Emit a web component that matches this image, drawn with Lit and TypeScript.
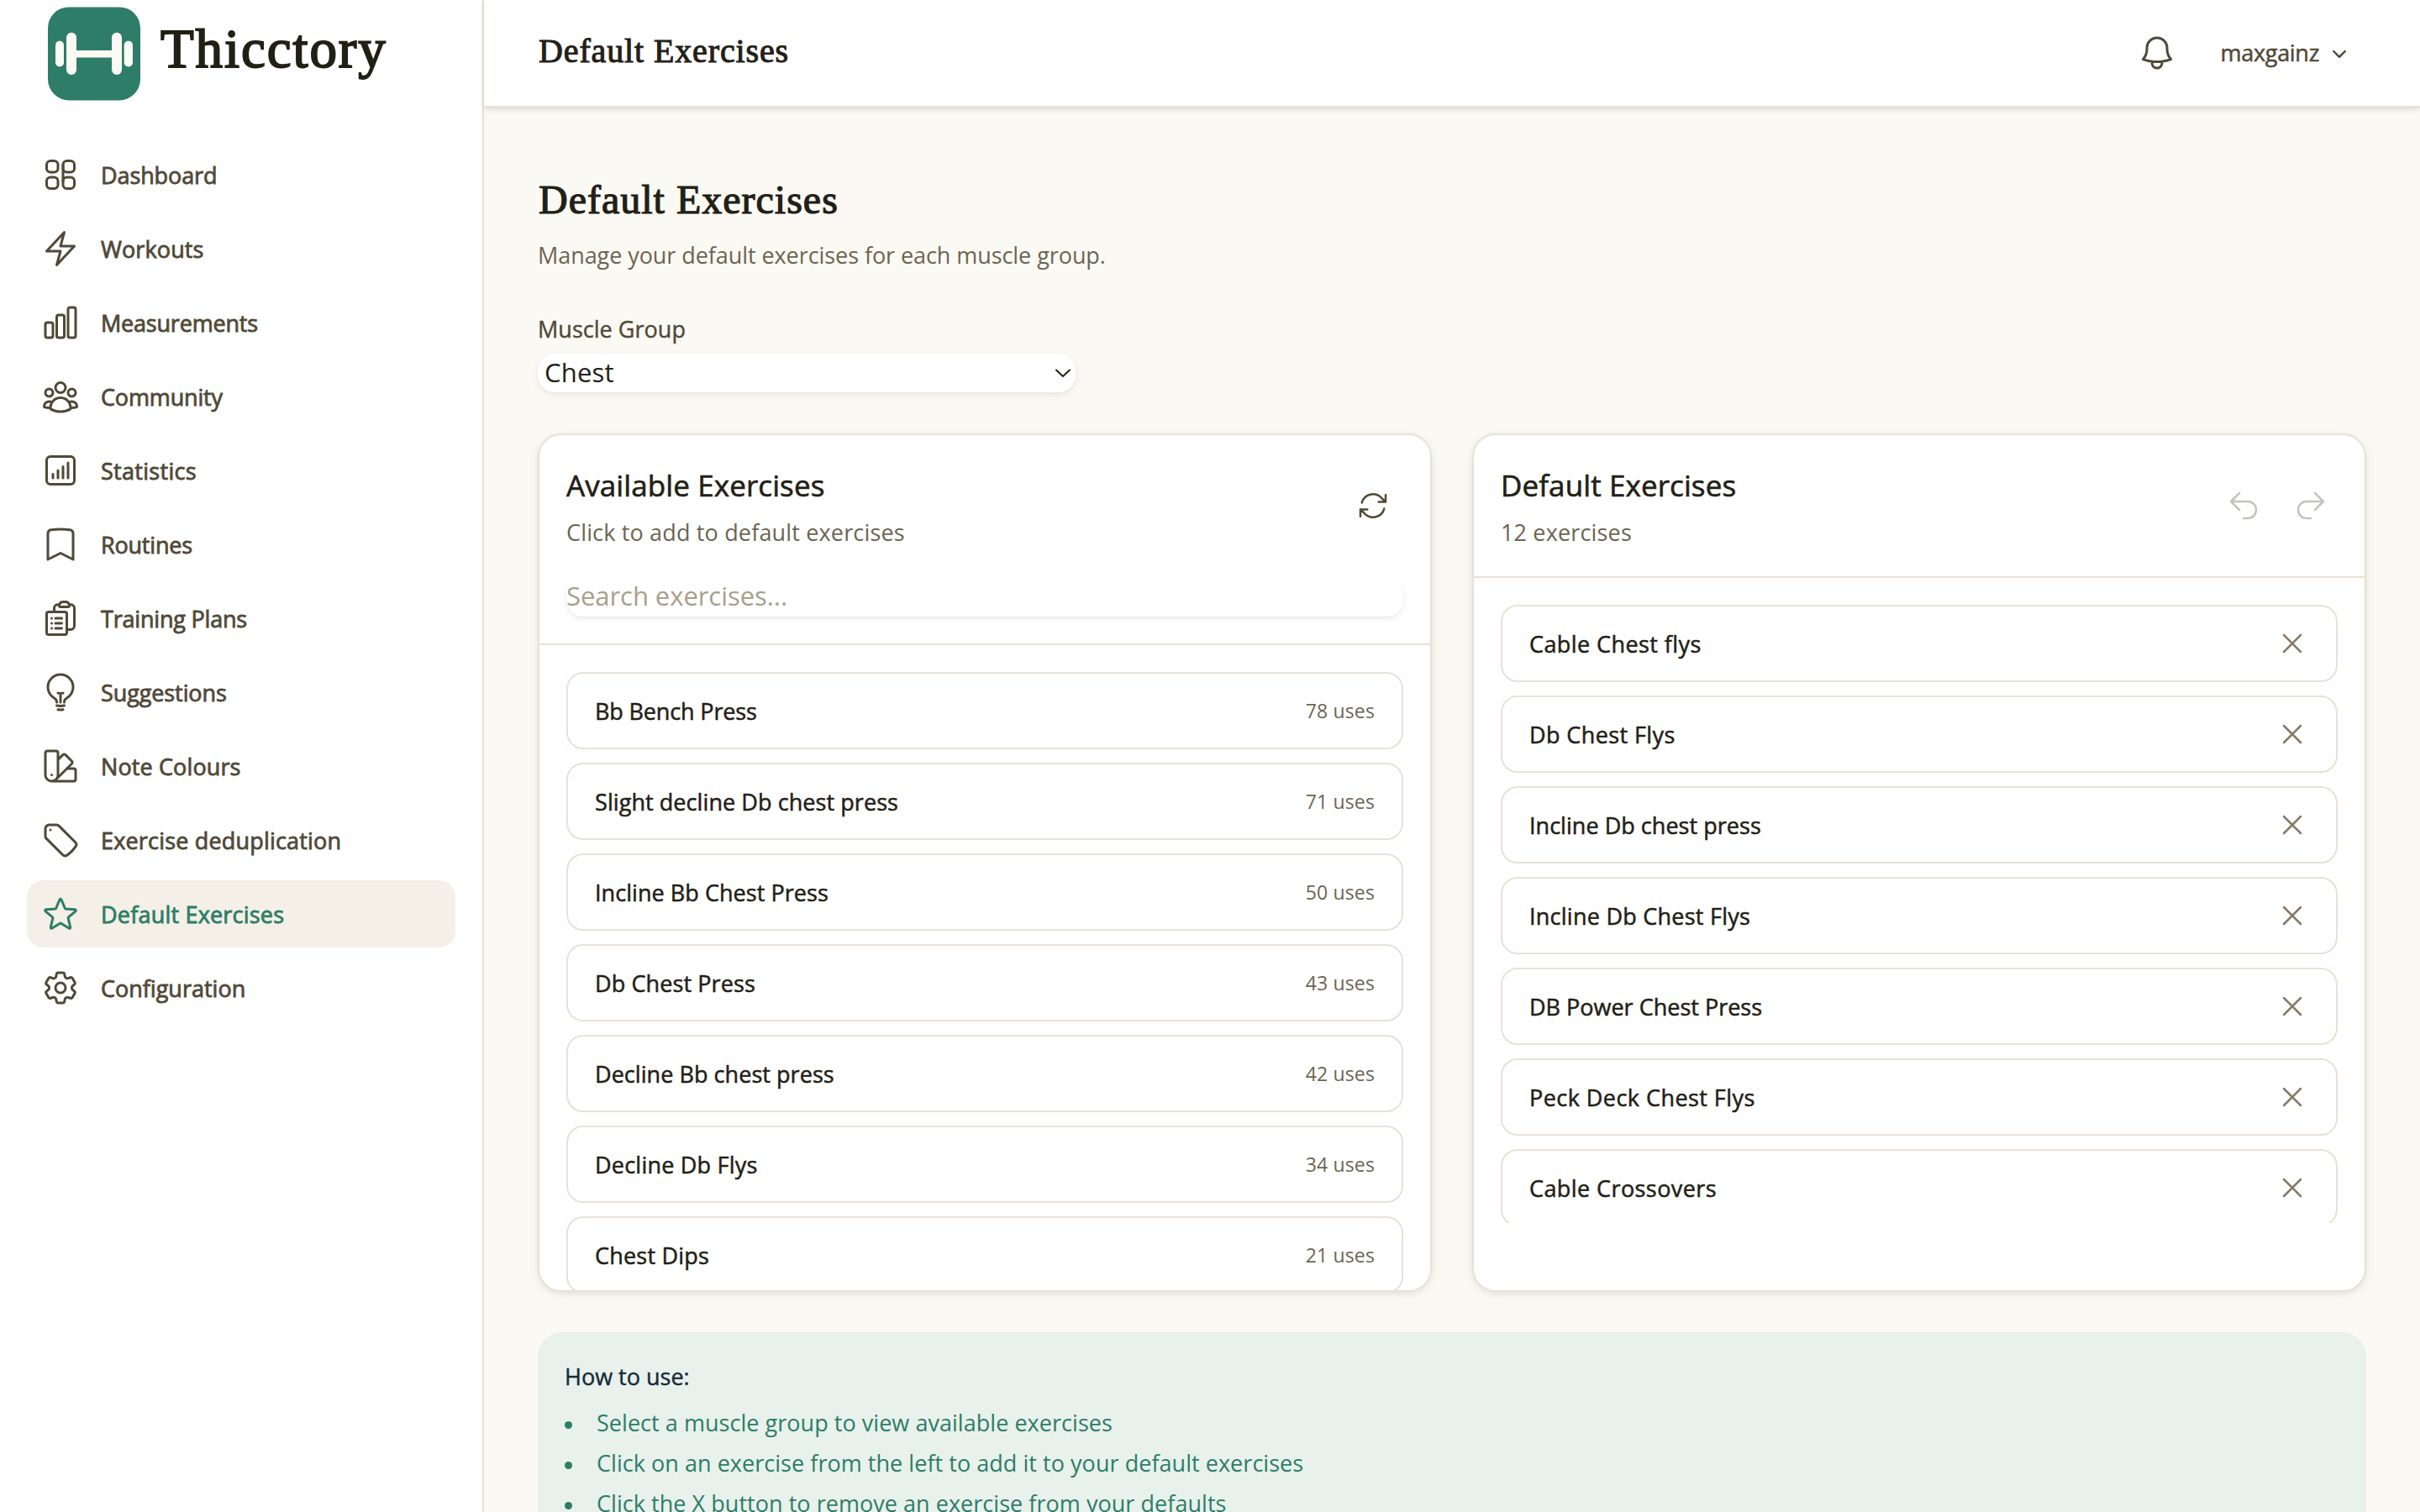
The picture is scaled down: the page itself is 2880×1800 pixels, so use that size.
import { LitElement, html, css, svg } from "lit";
import { customElement, property } from "lit/decorators.js";
import { classMap } from "lit/directives/class-map.js";
import { styleMap } from "lit/directives/style-map.js";

const ICONS: Record<string, string[]> = {
  grid: [
    "M3.75 6A2.25 2.25 0 0 1 6 3.75h2.25A2.25 2.25 0 0 1 10.5 6v2.25a2.25 2.25 0 0 1-2.25 2.25H6a2.25 2.25 0 0 1-2.25-2.25V6ZM3.75 15.75A2.25 2.25 0 0 1 6 13.5h2.25a2.25 2.25 0 0 1 2.25 2.25V18a2.25 2.25 0 0 1-2.25 2.25H6A2.25 2.25 0 0 1 3.75 18v-2.25ZM13.5 6a2.25 2.25 0 0 1 2.25-2.25H18A2.25 2.25 0 0 1 20.25 6v2.25A2.25 2.25 0 0 1 18 10.5h-2.25a2.25 2.25 0 0 1-2.25-2.25V6ZM13.5 15.75a2.25 2.25 0 0 1 2.25-2.25H18a2.25 2.25 0 0 1 2.25 2.25V18A2.25 2.25 0 0 1 18 20.25h-2.25A2.25 2.25 0 0 1 13.5 18v-2.25Z",
    "M13.5 6v9.75",
  ],
  bolt: ["m3.75 13.5 10.5-11.25L12 10.5h8.25L9.75 21.75 12 13.5H3.75Z"],
  bars: ["M3 13.125C3 12.504 3.504 12 4.125 12h2.25c.621 0 1.125.504 1.125 1.125v6.75C7.5 20.496 6.996 21 6.375 21h-2.25A1.125 1.125 0 0 1 3 19.875v-6.75ZM9.75 8.625c0-.621.504-1.125 1.125-1.125h2.25c.621 0 1.125.504 1.125 1.125v11.25c0 .621-.504 1.125-1.125 1.125h-2.25a1.125 1.125 0 0 1-1.125-1.125V8.625ZM16.5 4.125c0-.621.504-1.125 1.125-1.125h2.25C20.496 3 21 3.504 21 4.125v15.75c0 .621-.504 1.125-1.125 1.125h-2.25a1.125 1.125 0 0 1-1.125-1.125V4.125Z"],
  group: ["M18 18.72a9.094 9.094 0 0 0 3.741-.479 3 3 0 0 0-4.682-2.72m.94 3.198.001.031c0 .225-.012.447-.037.666A11.944 11.944 0 0 1 12 21c-2.17 0-4.207-.576-5.963-1.584A6.062 6.062 0 0 1 6 18.719m12 0a5.971 5.971 0 0 0-.941-3.197m0 0A5.995 5.995 0 0 0 12 12.75a5.995 5.995 0 0 0-5.058 2.772m0 0a3 3 0 0 0-4.681 2.72 8.986 8.986 0 0 0 3.74.477m.94-3.197a5.971 5.971 0 0 0-.94 3.197M15 6.75a3 3 0 1 1-6 0 3 3 0 0 1 6 0Zm6 3a2.25 2.25 0 1 1-4.5 0 2.25 2.25 0 0 1 4.5 0Zm-13.5 0a2.25 2.25 0 1 1-4.5 0 2.25 2.25 0 0 1 4.5 0Z"],
  stats: ["M7.5 14.25v2.25m3-4.5v4.5m3-6.75v6.75m3-9v9M6 20.25h12A2.25 2.25 0 0 0 20.25 18V6A2.25 2.25 0 0 0 18 3.75H6A2.25 2.25 0 0 0 3.75 6v12A2.25 2.25 0 0 0 6 20.25Z"],
  bookmark: ["M17.593 3.322c1.1.128 1.907 1.077 1.907 2.185V21L12 17.25 4.5 21V5.507c0-1.108.806-2.057 1.907-2.185a48.507 48.507 0 0 1 11.186 0Z"],
  clipboard: ["M9 12h3.75M9 15h3.75M9 18h3.75m3 .75H18a2.25 2.25 0 0 0 2.25-2.25V6.108c0-1.135-.845-2.098-1.976-2.192a48.424 48.424 0 0 0-1.123-.08m-5.801 0c-.065.21-.1.433-.1.664 0 .414.336.75.75.75h4.5a.75.75 0 0 0 .75-.75 2.25 2.25 0 0 0-.1-.664m-5.8 0A2.251 2.251 0 0 1 13.5 2.25H15c1.012 0 1.867.668 2.15 1.586m-5.8 0c-.376.023-.75.05-1.124.08C9.095 4.01 8.25 4.973 8.25 6.108V8.25m0 0H4.875c-.621 0-1.125.504-1.125 1.125v11.25c0 .621.504 1.125 1.125 1.125h9.75c.621 0 1.125-.504 1.125-1.125V9.375c0-.621-.504-1.125-1.125-1.125H8.25ZM6.75 12h.008v.008H6.75V12Zm0 3h.008v.008H6.75V15Zm0 3h.008v.008H6.75V18Z"],
  bulb: ["M12 18v-5.25m0 0a6.01 6.01 0 0 0 1.5-.189m-1.5.189a6.01 6.01 0 0 1-1.5-.189m3.75 7.478a12.06 12.06 0 0 1-4.5 0m3.75 2.383a14.406 14.406 0 0 1-3 0M14.25 18v-.192c0-.983.658-1.823 1.508-2.316a7.5 7.5 0 1 0-7.517 0c.85.493 1.509 1.333 1.509 2.316V18"],
  swatch: ["M4.098 19.902a3.75 3.75 0 0 0 5.304 0l6.401-6.402M6.75 21A3.75 3.75 0 0 1 3 17.25V4.125C3 3.504 3.504 3 4.125 3h5.25c.621 0 1.125.504 1.125 1.125v4.072M6.75 21a3.75 3.75 0 0 0 3.75-3.75V8.197M6.75 21h13.125c.621 0 1.125-.504 1.125-1.125v-5.25c0-.621-.504-1.125-1.125-1.125h-4.072M10.5 8.197l2.88-2.88c.438-.439 1.15-.439 1.59 0l3.712 3.713c.44.44.44 1.152 0 1.59l-2.879 2.88M6.75 17.25h.008v.008H6.75v-.008Z"],
  tag: ["M9.568 3H5.25A2.25 2.25 0 0 0 3 5.25v4.318c0 .597.237 1.17.659 1.591l9.581 9.581c.699.699 1.78.872 2.607.33a18.095 18.095 0 0 0 5.223-5.223c.542-.827.369-1.908-.33-2.607L11.16 3.66A2.25 2.25 0 0 0 9.568 3Z", "M6 6h.008v.008H6V6Z"],
  star: ["M11.48 3.499a.562.562 0 0 1 1.04 0l2.125 5.111a.563.563 0 0 0 .475.345l5.518.442c.499.04.701.663.321.988l-4.204 3.602a.563.563 0 0 0-.182.557l1.285 5.385a.562.562 0 0 1-.84.61l-4.725-2.885a.562.562 0 0 0-.586 0L6.982 20.54a.562.562 0 0 1-.84-.61l1.285-5.386a.562.562 0 0 0-.182-.557l-4.204-3.602a.562.562 0 0 1 .321-.988l5.518-.442a.563.563 0 0 0 .475-.345L11.48 3.5Z"],
  cog: ["M9.594 3.94c.09-.542.56-.94 1.11-.94h2.593c.55 0 1.02.398 1.11.94l.213 1.281c.063.374.313.686.645.87.074.04.147.083.22.127.325.196.72.257 1.075.124l1.217-.456a1.125 1.125 0 0 1 1.37.49l1.296 2.247a1.125 1.125 0 0 1-.26 1.431l-1.003.827c-.293.241-.438.613-.43.992a7.723 7.723 0 0 1 0 .255c-.008.378.137.75.43.991l1.004.827c.424.35.534.955.26 1.43l-1.298 2.247a1.125 1.125 0 0 1-1.369.491l-1.217-.456c-.355-.133-.75-.072-1.076.124a6.47 6.47 0 0 1-.22.128c-.331.183-.581.495-.644.869l-.213 1.281c-.09.543-.56.94-1.11.94h-2.594c-.55 0-1.019-.398-1.11-.94l-.213-1.281c-.062-.374-.312-.686-.644-.87a6.52 6.52 0 0 1-.22-.127c-.325-.196-.72-.257-1.076-.124l-1.217.456a1.125 1.125 0 0 1-1.369-.49l-1.297-2.247a1.125 1.125 0 0 1 .26-1.431l1.004-.827c.292-.24.437-.613.43-.991a6.932 6.932 0 0 1 0-.255c.007-.38-.138-.751-.43-.992l-1.004-.827a1.125 1.125 0 0 1-.26-1.43l1.297-2.247a1.125 1.125 0 0 1 1.37-.491l1.216.456c.356.133.751.072 1.076-.124.072-.044.146-.086.22-.128.332-.183.582-.495.644-.869l.214-1.28Z", "M15 12a3 3 0 1 1-6 0 3 3 0 0 1 6 0Z"],
  bell: ["M14.857 17.082a23.848 23.848 0 0 0 5.454-1.31A8.967 8.967 0 0 1 18 9.75V9A6 6 0 0 0 6 9v.75a8.967 8.967 0 0 1-2.312 6.022c1.733.64 3.56 1.085 5.455 1.31m5.714 0a24.255 24.255 0 0 1-5.714 0m5.714 0a3 3 0 1 1-5.714 0"],
  refresh: ["M16.023 9.348h4.992v-.001M2.985 19.644v-4.992m0 0h4.992m-4.993 0 3.181 3.183a8.25 8.25 0 0 0 13.803-3.7M4.031 9.865a8.25 8.25 0 0 1 13.803-3.7l3.181 3.182m0-4.991v4.99"],
  undo: ["M9 15 3 9m0 0 6-6M3 9h12a6 6 0 0 1 0 12h-3"],
  redo: ["m15 15 6-6m0 0-6-6m6 6H9a6 6 0 0 0 0 12h3"],
  close: ["M6 18 18 6M6 6l12 12"],
};

@customElement("line-icon")
export class LineIcon extends LitElement {
  static styles = css`
    :host { display: block; flex: none; width: 48px; height: 48px; }
    svg { display: block; width: 100%; height: 100%; }
  `;
  @property() name = "";
  render() {
    return html`<svg viewBox="0 0 24 24" fill="none" stroke="currentColor" stroke-width="1.5" stroke-linecap="round" stroke-linejoin="round">
      ${(ICONS[this.name] ?? []).map((d) => svg`<path d=${d}></path>`)}
    </svg>`;
  }
}

// icon, label, tracking in px
const NAV: [string, string, number][] = [
  ["grid", "Dashboard", -0.1],
  ["bolt", "Workouts", 0.1],
  ["bars", "Measurements", -0.2],
  ["group", "Community", -0.15],
  ["stats", "Statistics", 0.3],
  ["bookmark", "Routines", -0.2],
  ["clipboard", "Training Plans", -0.2],
  ["bulb", "Suggestions", -0.1],
  ["swatch", "Note Colours", 0.12],
  ["tag", "Exercise deduplication", 0.18],
  ["star", "Default Exercises", 0.2],
  ["cog", "Configuration", 0],
];

// name, number of uses, tracking in px
const AVAILABLE: [string, number, number][] = [
  ["Bb Bench Press", 78, -0.15],
  ["Slight decline Db chest press", 71, 0.07],
  ["Incline Bb Chest Press", 50, 0.05],
  ["Db Chest Press", 43, 0.1],
  ["Decline Bb chest press", 42, 0.05],
  ["Decline Db Flys", 34, 0.22],
  ["Chest Dips", 21, 0.2],
];

// name, tracking in px
const DEFAULTS: [string, number][] = [
  ["Cable Chest flys", 0.42],
  ["Db Chest Flys", 0.4],
  ["Incline Db chest press", 0.03],
  ["Incline Db Chest Flys", 0.25],
  ["DB Power Chest Press", 0],
  ["Peck Deck Chest Flys", 0.45],
  ["Cable Crossovers", 0.42],
];

const TIPS = [
  "Select a muscle group to view available exercises",
  "Click on an exercise from the left to add it to your default exercises",
  "Click the X button to remove an exercise from your defaults",
];

const track = (px: number) => styleMap({ letterSpacing: `${px}px` });

@customElement("app-root")
export class AppRoot extends LitElement {
  static styles = css`
    :host {
      display: flex;
      height: 1800px;
      overflow: hidden;
      background: #fbf9f4;
      color: #222015;
      font-family: "Open Sans", "Liberation Sans", sans-serif;
      font-size: 27px;
      line-height: 40px;
      white-space: nowrap;
    }
    * { box-sizing: border-box; margin: 0; padding: 0; }
    h1, h2, h3 { font-weight: 400; }

    .sidebar {
      flex: none;
      width: 576px;
      background: #fff;
      border-right: 2px solid #e9e2d6;
      display: flex;
      flex-direction: column;
    }
    .brand { display: flex; height: 168px; padding: 8px 0 0 57px; }
    .logo { flex: none; display: block; width: 110px; height: 112px; }
    .brand-name {
      margin-left: 24px;
      height: 100px;
      line-height: 100px;
      font-family: "Liberation Serif", serif;
      font-size: 65px;
      letter-spacing: 1.9px;
      -webkit-text-stroke: 1.9px currentColor;
    }
    nav { display: flex; flex-direction: column; gap: 8px; padding: 0 32px; }
    .nav-item {
      display: flex;
      align-items: center;
      gap: 24px;
      height: 80px;
      padding: 0 16px;
      border-radius: 20px;
      color: #4f4937;
      -webkit-text-stroke: 0.8px currentColor;
    }
    .nav-item span { padding-top: 1px; }
    .nav-item.active { background: #f4efe7; color: #2d7d67; }

    .page { flex: 1; min-width: 0; display: flex; flex-direction: column; }
    .topbar {
      flex: none;
      height: 128px;
      display: flex;
      align-items: center;
      padding: 0 64px;
      background: #fff;
      border-bottom: 2px solid #e7e3d5;
      box-shadow: 0 2px 6px rgba(0, 0, 0, 0.1), 0 4px 12px rgba(0, 0, 0, 0.03);
    }
    .topbar h2 {
      flex: 1;
      font-family: "Liberation Serif", serif;
      font-size: 40px;
      line-height: 44px;
      padding: 0 0 5px 1px;
      letter-spacing: 0.87px;
      -webkit-text-stroke: 1px currentColor;
    }
    .user {
      display: flex;
      align-items: center;
      gap: 8px;
      margin-left: 36px;
      padding: 0 16px;
      color: #4f4937;
      letter-spacing: -0.3px;
      -webkit-text-stroke: 0.5px currentColor;
    }
    .bell, .tool { color: #4f4937; }
    .chev { display: block; width: 32px; height: 32px; }

    main { display: flex; flex-direction: column; padding: 78px 64px 0; }
    h1 {
      font-family: "Liberation Serif", serif;
      font-size: 48px;
      line-height: 64px;
      padding-left: 1px;
      letter-spacing: 1px;
      -webkit-text-stroke: 1.2px currentColor;
    }
    .lead { margin-top: 14px; color: #6b6552; letter-spacing: -0.07px; }
    .label {
      margin-top: 48px;
      color: #4f4937;
      letter-spacing: 0.03px;
      -webkit-text-stroke: 0.4px currentColor;
    }
    .select {
      margin-top: 9px;
      width: 640px;
      height: 46px;
      display: flex;
      align-items: center;
      justify-content: space-between;
      padding: 0 5px 3px 8px;
      border-radius: 20px;
      background: #fff;
      box-shadow: 0 2px 4px rgba(60, 50, 20, 0.06), 0 4px 12px rgba(60, 50, 20, 0.05);
      font-size: 31px;
      letter-spacing: 0.2px;
    }
    .select svg { display: block; width: 20px; height: 12px; margin-top: 3px; }

    .cards { margin-top: 49px; display: grid; grid-template-columns: 1fr 1fr; gap: 48px; }
    .card {
      display: flex;
      flex-direction: column;
      background: #fff;
      border: 2px solid #e8e2d5;
      border-radius: 28px;
      overflow: hidden;
      box-shadow: 0 2px 6px rgba(60, 50, 20, 0.08), 0 4px 16px rgba(60, 50, 20, 0.05);
    }
    .card-head { padding: 32px; border-bottom: 2px solid #e8e2d5; }
    .head-row { display: flex; align-items: center; height: 104px; }
    .titles { flex: 1; }
    h3 {
      font-size: 35px;
      line-height: 56px;
      letter-spacing: 0.1px;
      -webkit-text-stroke: 0.6px currentColor;
    }
    .hint { margin-top: 8px; color: #6b6552; letter-spacing: 0.16px; }
    .tool { width: 40px; height: 40px; margin-right: 16px; }
    .tools { display: flex; gap: 40px; padding-right: 12px; }
    .tools .tool { margin: 0; opacity: 0.32; }
    .search {
      display: block;
      width: 100%;
      height: 48px;
      margin-top: 32px;
      padding: 0 0 2px;
      border: 0;
      border-radius: 20px;
      background: #fff;
      box-shadow: 0 2px 4px rgba(0, 0, 0, 0.06), 0 4px 12px rgba(0, 0, 0, 0.04);
      font: inherit;
      font-size: 31px;
      letter-spacing: -0.05px;
    }
    .search::placeholder { color: #a8a08c; opacity: 1; }
    .list {
      display: flex;
      flex-direction: column;
      gap: 16px;
      height: 768px;
      padding: 32px 32px 0;
      overflow: hidden;
    }
    .row {
      flex: none;
      display: flex;
      align-items: center;
      justify-content: space-between;
      height: 92px;
      padding: 0 32px;
      border: 2px solid #e8e2d5;
      border-radius: 20px;
    }
    .row-name { padding-top: 1px; -webkit-text-stroke: 0.5px currentColor; }
    .uses { font-size: 23px; color: #6b6552; letter-spacing: 0.15px; }
    .remove { width: 40px; height: 40px; color: #857b66; }

    .tips {
      margin-top: 48px;
      height: 330px;
      padding: 33px 32px 0;
      border-radius: 28px;
      background: #e8f1eb;
      color: #2d7d67;
    }
    .tips-title { color: #16293a; -webkit-text-stroke: 0.4px currentColor; }
    .tips ul { list-style: none; margin-top: 11px; }
    .tips li { display: flex; align-items: center; line-height: 48px; height: 48px; letter-spacing: 0.04px; }
    .tips li::before {
      content: "";
      width: 9px;
      height: 9px;
      margin: 4px 29px 0 0;
      border-radius: 50%;
      background: currentColor;
    }
  `;

  render() {
    return html`
      <aside class="sidebar">
        <div class="brand">
          <svg class="logo" viewBox="0 0 110 112">
            <rect y=".4" width="110" height="111" rx="25" fill="#2e7d68"></rect>
            <g fill="#fbf9f3">
              <rect x="9" y="40.7" width="10" height="30.7" rx="5"></rect>
              <rect x="22" y="30.7" width="12" height="50.3" rx="6"></rect>
              <rect x="76" y="30.7" width="12" height="50.3" rx="6"></rect>
              <rect x="90.7" y="40.7" width="10.3" height="30.7" rx="5"></rect>
              <rect x="32" y="52" width="46" height="8.5"></rect>
            </g>
          </svg>
          <span class="brand-name">Thicctory</span>
        </div>
        <nav>
          ${NAV.map(([icon, label, px]) => html`
            <a class=${classMap({ "nav-item": true, active: icon === "star" })}>
              <line-icon name=${icon}></line-icon><span style=${track(px)}>${label}</span>
            </a>`)}
        </nav>
      </aside>
      <div class="page">
        <header class="topbar">
          <h2>Default Exercises</h2>
          <line-icon class="bell" name="bell"></line-icon>
          <div class="user">
            <span>maxgainz</span>
            <svg class="chev" viewBox="0 0 20 20" fill="currentColor" stroke="none">
              <path d="M5.22 8.22a.75.75 0 0 1 1.06 0L10 11.94l3.72-3.72a.75.75 0 1 1 1.06 1.06l-4.25 4.25a.75.75 0 0 1-1.06 0L5.22 9.28a.75.75 0 0 1 0-1.06Z"></path>
            </svg>
          </div>
        </header>
        <main>
          <h1>Default Exercises</h1>
          <p class="lead">Manage your default exercises for each muscle group.</p>
          <span class="label">Muscle Group</span>
          <div class="select">
            <span>Chest</span>
            <svg viewBox="0 0 20 12" fill="none" stroke="#222015" stroke-width="2" stroke-linecap="round" stroke-linejoin="round">
              <path d="m2 2.5 8 7.5 8-7.5"></path>
            </svg>
          </div>
          <section class="cards">
            <div class="card">
              <div class="card-head">
                <div class="head-row">
                  <div class="titles">
                    <h3>Available Exercises</h3>
                    <p class="hint">Click to add to default exercises</p>
                  </div>
                  <line-icon class="tool" name="refresh"></line-icon>
                </div>
                <input class="search" placeholder="Search exercises..." />
              </div>
              <div class="list">
                ${AVAILABLE.map(([name, uses, px]) => html`
                  <div class="row"><span class="row-name" style=${track(px)}>${name}</span><span class="uses">${uses} uses</span></div>`)}
              </div>
            </div>
            <div class="card">
              <div class="card-head">
                <div class="head-row">
                  <div class="titles">
                    <h3>Default Exercises</h3>
                    <p class="hint">12 exercises</p>
                  </div>
                  <div class="tools">
                    <line-icon class="tool" name="undo"></line-icon>
                    <line-icon class="tool" name="redo"></line-icon>
                  </div>
                </div>
              </div>
              <div class="list">
                ${DEFAULTS.map(([name, px]) => html`
                  <div class="row"><span class="row-name" style=${track(px)}>${name}</span><line-icon class="remove" name="close"></line-icon></div>`)}
              </div>
            </div>
          </section>
          <section class="tips">
            <p class="tips-title">How to use:</p>
            <ul>${TIPS.map((tip) => html`<li>${tip}</li>`)}</ul>
          </section>
        </main>
      </div>
    `;
  }
}
